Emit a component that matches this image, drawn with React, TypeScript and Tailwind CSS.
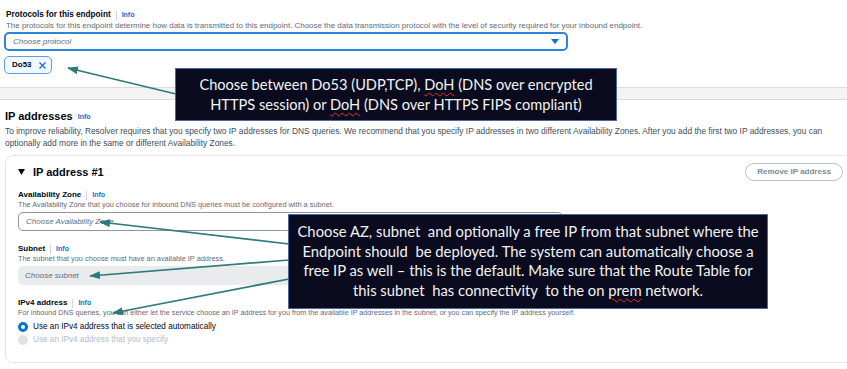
import React from 'react';

const ARROW = '#2e7b7b';

const Info = ({ className = '' }: { className?: string }) => (
    <span className={`font-bold text-[#0972d3] ${className}`}>Info</span>
);

const FieldLabel = ({ children }: { children: React.ReactNode }) => (
    <div className="flex h-[10px] items-center text-[8px] font-bold leading-[10px] text-[#000716]">
        <span>{children}</span>
        <span className="mx-[5px] h-[9px] w-px bg-[#d1d5db]" />
        <Info className="text-[7px]" />
    </div>
);

const Hint = ({ children, className = '' }: { children: React.ReactNode; className?: string }) => (
    <p className={`h-[10px] leading-[10px] text-[#5f6b7a] whitespace-nowrap ${className}`}>{children}</p>
);

const Callout = ({ className, children }: { className: string; children: React.ReactNode }) => (
    <div
        className={`absolute border border-[#4b6a9b] bg-[#0a0b1e] text-center text-[#f3f3f3] font-['Lato','Open_Sans',sans-serif] whitespace-pre ${className}`}
    >
        {children}
    </div>
);

const Typo = ({ children }: { children: React.ReactNode }) => (
    <span className="underline decoration-wavy decoration-[#e0302a] decoration-1 underline-offset-2">{children}</span>
);

export default function App() {
    return (
        <div className="relative h-[369px] w-[847px] overflow-hidden bg-white font-['Liberation_Sans',Arial,sans-serif] text-[#000716]">
            {/* Protocols */}
            <div className="h-[88px] border-b border-[#dcdcdc] px-[4px] pt-[9px]">
                <div className="flex h-[12px] items-center pl-[2px] text-[8.2px] font-bold leading-[12px]">
                    <span>Protocols for this endpoint</span>
                    <span className="mx-[5px] h-[9px] w-px bg-[#d1d5db]" />
                    <Info className="text-[7px]" />
                </div>
                <p className="h-[9px] pl-[2px] text-[7.95px] leading-[9px] text-[#5f6b7a] whitespace-nowrap">
                    The protocols for this endpoint determine how data is transmitted to this endpoint. Choose the data transmission protocol with the level of security required for your inbound endpoint.
                </p>
                <div className="mt-[2px] flex h-[19px] w-[564px] items-center justify-between rounded-[5px] border-2 border-[#2f83d9] pl-[7px] pr-[7px]">
                    <span className="text-[8px] italic text-[#5f6b7a]">Choose protocol</span>
                    <svg width="8" height="5" viewBox="0 0 8 5">
                        <path d="M0 0 H8 L4 5 Z" fill="#0972d3" />
                    </svg>
                </div>
                <div className="mt-[5px] flex h-[18px] w-[48px] items-center gap-[7px] rounded-[5px] border border-[#5b9fe2] bg-[#f1f8ff] pl-[7px]">
                    <span className="text-[8px] font-bold">Do53</span>
                    <svg width="7" height="7" viewBox="0 0 7 7">
                        <path d="M0.5 0.5 L6.5 6.5 M6.5 0.5 L0.5 6.5" stroke="#0972d3" strokeWidth="1.2" />
                    </svg>
                </div>
            </div>
            <div className="h-[11px] bg-[#f3f3f3]" />

            {/* IP addresses */}
            <div className="border-t border-[#dcdcdc] pl-[5px] pt-[9px]">
                <div className="flex h-[14px] items-center">
                    <span className="text-[11px] font-bold leading-[14px]">IP addresses</span>
                    <Info className="ml-[5px] mt-[2px] text-[7px]" />
                </div>
                <p className="mt-[2px] text-[8.4px] leading-[12px] text-[#414d5c] whitespace-nowrap">
                    To improve reliability, Resolver requires that you specify two IP addresses for DNS queries. We recommend that you specify IP addresses in two different Availability Zones. After you add the first two IP addresses, you can
                    <br />
                    optionally add more in the same or different Availability Zones.
                </p>

                <div className="mt-[6px] w-[847px] rounded-l-[8px] border border-[#e3e5e8] pb-[16px] pl-[12px] pr-[8px] pt-[7px]">
                    <div className="flex h-[18px] items-center justify-between">
                        <div className="flex items-center gap-[8px]">
                            <svg width="7" height="6" viewBox="0 0 7 6">
                                <path d="M0 0 H7 L3.5 6 Z" fill="#000716" />
                            </svg>
                            <span className="text-[11px] font-bold">IP address #1</span>
                        </div>
                        <button className="flex h-[18px] w-[98px] items-center justify-center rounded-full border border-[#b8c0ca] text-[8px] font-bold text-[#7d8998]">
                            Remove IP address
                        </button>
                    </div>

                    <div className="mt-[9px]">
                        <FieldLabel>Availability Zone</FieldLabel>
                        <Hint className="text-[7.35px]">The Availability Zone that you choose for inbound DNS queries must be configured with a subnet.</Hint>
                        <div className="mt-[2px] flex h-[19px] w-[545px] items-center rounded-[5px] border border-[#8d99a8] pl-[7px]">
                            <span className="text-[8px] italic text-[#5f6b7a]">Choose Availability Zone</span>
                        </div>
                    </div>

                    <div className="mt-[13px]">
                        <FieldLabel>Subnet</FieldLabel>
                        <Hint className="text-[7.35px]">The subnet that you choose must have an available IP address.</Hint>
                        <div className="mt-[2px] flex h-[19px] w-[545px] items-center rounded-[5px] bg-[#e9ebed] pl-[7px]">
                            <span className="text-[8px] italic text-[#5f6b7a]">Choose subnet</span>
                        </div>
                    </div>

                    <div className="mt-[13px]">
                        <FieldLabel>IPv4 address</FieldLabel>
                        <Hint className="text-[7.2px]">For inbound DNS queries, you can either let the service choose an IP address for you from the available IP addresses in the subnet, or you can specify the IP address yourself.</Hint>
                        <div className="mt-[3px] flex h-[12px] items-center gap-[5px]">
                            <span className="box-border h-[10px] w-[10px] rounded-full border-[3px] border-[#0972d3] bg-white" />
                            <span className="text-[8.2px] text-[#000716]">Use an IPv4 address that is selected automatically</span>
                        </div>
                        <div className="mt-[1px] flex h-[12px] items-center gap-[5px]">
                            <span className="h-[10px] w-[10px] rounded-full bg-[#dfe2e6]" />
                            <span className="text-[8.2px] text-[#b4bcc6]">Use an IPv4 address that you specify</span>
                        </div>
                    </div>
                </div>
            </div>

            {/* annotation arrows */}
            <svg className="pointer-events-none absolute left-0 top-0" width="847" height="369">
                <defs>
                    <marker id="head" markerWidth="11" markerHeight="8" refX="10" refY="4" orient="auto" markerUnits="userSpaceOnUse">
                        <path d="M0 0 L11 4 L0 8 Z" fill={ARROW} />
                    </marker>
                </defs>
                <line x1="176" y1="94" x2="68" y2="68" stroke={ARROW} strokeWidth="1.75" markerEnd="url(#head)" />
                <line x1="289" y1="244" x2="100" y2="222" stroke={ARROW} strokeWidth="1.75" markerEnd="url(#head)" />
                <line x1="289" y1="260" x2="90" y2="276" stroke={ARROW} strokeWidth="1.75" markerEnd="url(#head)" />
                <line x1="289" y1="279" x2="113" y2="313" stroke={ARROW} strokeWidth="1.75" markerEnd="url(#head)" />
            </svg>

            <Callout className="left-[175px] top-[68px] h-[53px] w-[442px] pt-[6px] text-[14.6px] leading-[20px]">
                Choose between Do53 (UDP,TCP), <Typo>DoH</Typo> (DNS over encrypted
                <br />
                HTTPS session) or <Typo>DoH</Typo> (DNS over HTTPS FIPS compliant)
            </Callout>

            <Callout className="left-[288px] top-[214px] h-[95px] w-[480px] pt-[7px] text-[14.8px] leading-[19.5px]">
                Choose AZ, subnet  and optionally a free IP from that subnet where the
                <br />
                Endpoint should  be deployed. The system can automatically choose a
                <br />
                free IP as well – this is the default. Make sure that the Route Table for
                <br />
                this subnet  has connectivity  to the on <Typo>prem</Typo> network.
            </Callout>
        </div>
    );
}
